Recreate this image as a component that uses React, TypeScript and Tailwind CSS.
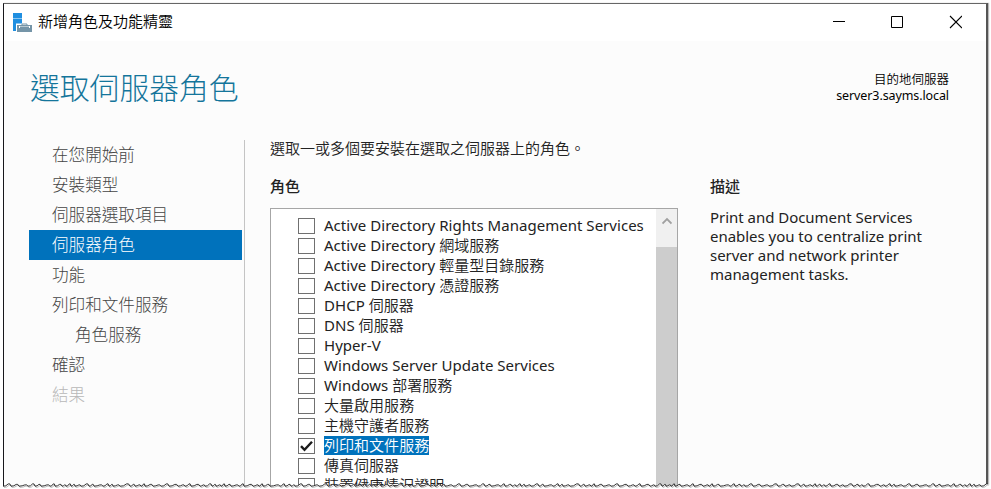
import { Fragment } from "react";

const steps = [
  { label: "在您開始前" },
  { label: "安裝類型" },
  { label: "伺服器選取項目" },
  { label: "伺服器角色", active: true },
  { label: "功能" },
  { label: "列印和文件服務" },
  { label: "角色服務", indent: true },
  { label: "確認" },
  { label: "結果", disabled: true },
];

const roles = [
  { label: "Active Directory Rights Management Services" },
  { label: "Active Directory 網域服務" },
  { label: "Active Directory 輕量型目錄服務" },
  { label: "Active Directory 憑證服務" },
  { label: "DHCP 伺服器" },
  { label: "DNS 伺服器" },
  { label: "Hyper-V" },
  { label: "Windows Server Update Services" },
  { label: "Windows 部署服務" },
  { label: "大量啟用服務" },
  { label: "主機守護者服務" },
  { label: "列印和文件服務", checked: true },
  { label: "傳真伺服器" },
  { label: "裝置健康情況證明" },
];

// The torn edge is a run of small teeth of uneven width: a slow rise, then a short drop.
const toothWidths = [8, 8, 9, 7, 6, 9, 5, 7, 4, 5, 4, 6, 8, 5, 9, 6, 4, 7, 10, 5, 6, 4, 8];
const tearPoints: number[][] = [];
for (let x = 3, i = 0; x < 987; x += toothWidths[i % 23], i++) {
  const w = toothWidths[i % 23];
  const top = 0.9 + (i % 3) * 0.5;
  tearPoints.push([x, 3.2], [x + w * 0.35, 2.8], [x + w * 0.65, top], [x + w * 0.85, top]);
}
const tearLine = tearPoints.map(([x, y]) => `${x},${y}`).join(" ");

function ServerIcon() {
  return (
    <svg width="21" height="20" viewBox="0 0 21 20">
      <path d="M1 0h9v18H1z" fill="#1f8ee0" />
      <path d="M1 5.5h9" stroke="#8ac6f2" />
      <path d="M4 10.5h16.5V20H4z" fill="#fff" />
      <path d="M5 12h15v7H5z" fill="#7595a8" />
      <path d="M10 12v-1h5v1" fill="none" stroke="#7595a8" />
      <path d="M7 13.5h11" stroke="#b9c9d2" />
      <path d="M7 13h1v2H7zM17 13h1v2h-1z" fill="#fff" />
    </svg>
  );
}

export default function App() {
  return (
    <div className="relative h-[489px] w-[991px] overflow-hidden bg-white pt-[3px] pl-[3px] font-['Noto_Sans','Noto_Sans_CJK_TC_DemiLight','Noto_Sans_CJK_TC',sans-serif] text-[#222]">
      <div className="flex h-[486px] w-[985px] flex-col border-t border-r-2 border-l border-t-[#666] border-r-[#555] border-l-[#18181c] bg-[#fcfcfc] shadow-[1px_0_1px_#bbb]">
        <header className="flex h-[37px] shrink-0 items-center bg-white pl-[8px]">
          <ServerIcon />
          <span className="mt-[-3px] ml-[5px] text-[15px] leading-[20px] text-black">新增角色及功能精靈</span>
          <svg className="mt-[-2px] ml-auto mr-[24px]" width="130" height="14" viewBox="0 0 130 14" fill="none" stroke="#000">
            <path d="M1 6.5h12" />
            <path d="M59.5 1.5h11v11h-11z" />
            <path d="M118 1l12 12M130 1l-12 12" strokeWidth="1.1" />
          </svg>
        </header>

        <div className="flex h-[98px] shrink-0 items-start justify-between pr-[37px] pl-[26px]">
          <h1 className="mt-[23px] font-['Noto_Sans_CJK_TC',sans-serif] text-[29.8px] leading-[44px] font-light text-[#14759b]">
            選取伺服器角色
          </h1>
          <div className="mt-[31px] text-right text-[12.5px] leading-[16px] text-black">
            <div>目的地伺服器</div>
            <div className="tracking-[-0.1px]">server3.sayms.local</div>
          </div>
        </div>

        <main className="flex min-h-0 flex-1">
          <nav className="mt-px ml-[25px] flex w-[216px] shrink-0 flex-col border-r border-[#c4c4c4] font-['Noto_Sans_CJK_TC',sans-serif]">
            {steps.map((s) => (
              <div
                key={s.label}
                className={`h-[30px] w-[213px] text-[16.6px] leading-[28px] font-light ${s.indent ? "pl-[46px]" : "pl-[23px]"} ${
                  s.active ? "bg-[#0072bc] text-white" : s.disabled ? "text-[#b8b8b8]" : "text-[#444]"
                }`}
              >
                {s.label}
              </div>
            ))}
          </nav>

          <section className="ml-[25px] flex w-[408px] shrink-0 flex-col">
            <p className="h-[37px] text-[15px] leading-[18px]">選取一或多個要安裝在選取之伺服器上的角色。</p>
            <h2 className="h-[32px] font-['Noto_Sans_CJK_TC',sans-serif] text-[15px] leading-[20px] font-medium">角色</h2>
            <div className="flex min-h-0 flex-1 overflow-hidden border border-b-0 border-[#a6a6a6] bg-white">
              <ul className="min-w-0 flex-1 pt-[6px] pl-[27px]">
                {roles.map((r) => (
                  <li key={r.label} className="flex h-[20px] items-center">
                    <span className="mt-px flex h-[16px] w-[17px] shrink-0 items-center justify-center border border-[#707070] bg-white">
                      {r.checked && (
                        <svg width="13" height="12" viewBox="0 0 13 12" fill="none" stroke="#1c1c1c" strokeWidth="2.4">
                          <path d="M1 6.2l3.5 3.6L12 1.8" />
                        </svg>
                      )}
                    </span>
                    <span
                      className={`ml-[9px] text-[15px] leading-[19px] tracking-[0.03px] whitespace-nowrap ${r.checked ? "bg-[#0072bc] text-white" : ""}`}
                    >
                      {r.label}
                    </span>
                  </li>
                ))}
              </ul>
              <div className="flex w-[21px] shrink-0 flex-col bg-[#cdcdcd]">
                <div className="flex h-[38px] justify-center bg-[#f0f0f0] pt-[8px]">
                  <svg width="10" height="8" viewBox="0 0 10 8" fill="none" stroke="#a0a0a0" strokeWidth="1.8">
                    <path d="M0.5 6.5L5 2l4.5 4.5" />
                  </svg>
                </div>
              </div>
            </div>
          </section>

          <aside className="ml-[32px] pt-[37px]">
            <h2 className="h-[32px] font-['Noto_Sans_CJK_TC',sans-serif] text-[15px] leading-[20px] font-medium">描述</h2>
            <p className="text-[15px] leading-[19px] tracking-[-0.03px]">
              {["Print and Document Services", "enables you to centralize print", "server and network printer", "management tasks."].map((line) => (
                <Fragment key={line}>
                  {line}
                  <br />
                </Fragment>
              ))}
            </p>
          </aside>
        </main>
      </div>

      <svg className="absolute bottom-0 left-0" width="991" height="6" viewBox="0 0 991 6" fill="none">
        <polygon points={`0,6 0,3 ${tearLine} 991,3 991,6`} fill="#fff" />
        <polyline points={tearLine} transform="translate(1 1.2)" stroke="#bbb" />
        <polyline points={tearLine} stroke="#333" />
      </svg>
    </div>
  );
}
